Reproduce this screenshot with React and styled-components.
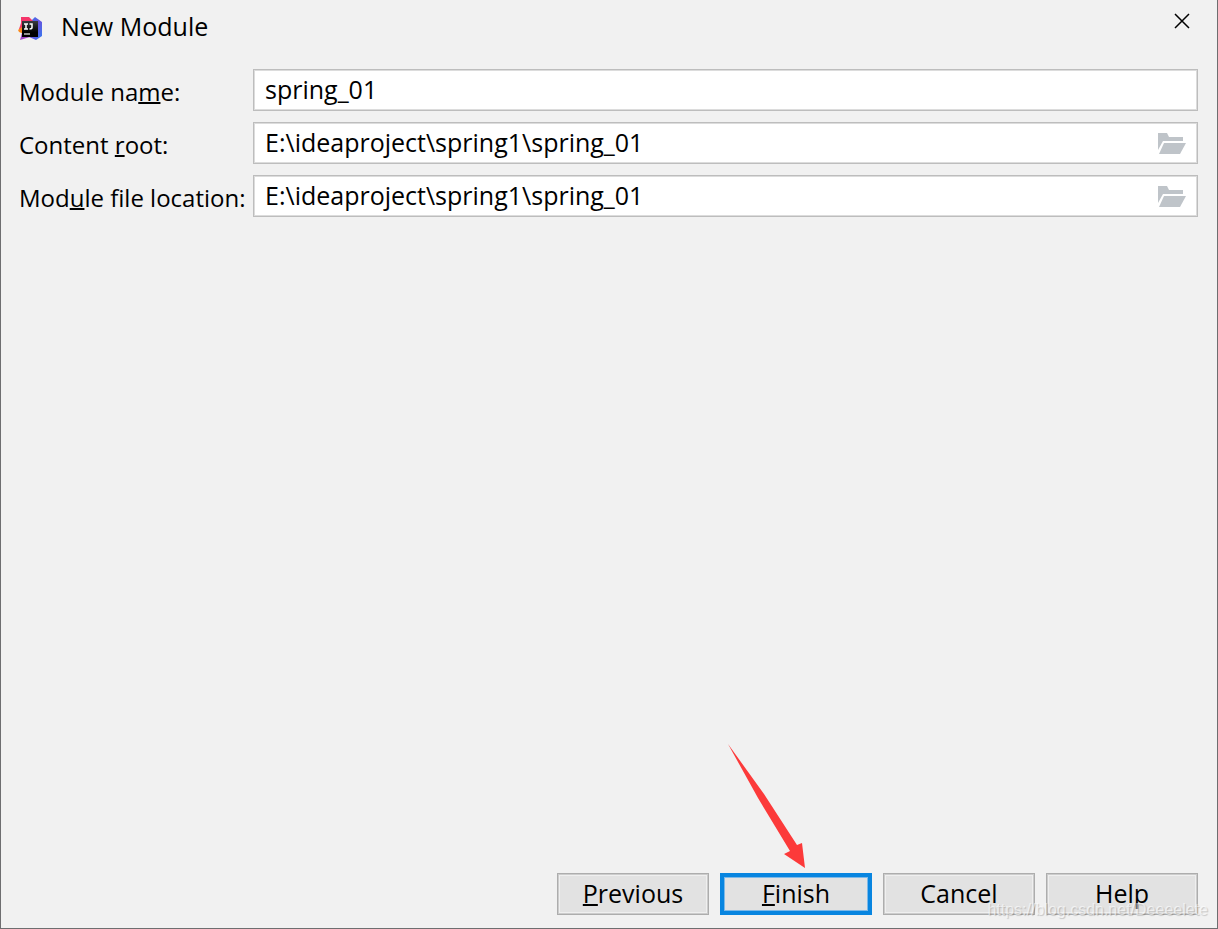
import React, { useState } from "react";
import styled, { createGlobalStyle, css } from "styled-components";

const GlobalStyle = createGlobalStyle`
  * {
    box-sizing: border-box;
  }
  body {
    margin: 0;
    background: #f1f1f1;
    color: #000;
    font-family: "Open Sans", "Noto Sans", sans-serif;
    font-size: 25px;
    line-height: 34px;
  }
  button,
  input {
    font: inherit;
    color: inherit;
  }
`;

const Dialog = styled.form`
  position: relative;
  display: flex;
  flex-direction: column;
  min-height: 100vh;
  border: 1px solid #6e6e70;
  border-top: none;
`;

const TitleBar = styled.header`
  display: flex;
  align-items: flex-start;
  padding: 9px 26px 0 17px;
  height: 69px;
`;

const Title = styled.h1`
  flex: 1;
  margin: 0 0 0 18px;
  font-size: 25px;
  font-weight: 400;
`;

const LogoSvg = styled.svg`
  margin-top: 7px;
  width: 25px;
  height: 25px;
`;

const CloseButton = styled.button`
  display: flex;
  margin-top: 3px;
  padding: 0;
  border: none;
  background: none;
`;

const Fields = styled.div`
  display: grid;
  grid-template-columns: 234px 1fr;
  row-gap: 11px;
  padding: 0 19px 0 18px;
  flex: 1;
  align-content: start;
`;

const Label = styled.label`
  padding-top: 6px;
  font-size: 24px;
  white-space: nowrap;
`;

const InputBox = styled.div`
  display: flex;
  align-items: center;
  height: 42px;
  padding-right: 10px;
  border: 1px solid #bdbdbd;
  box-shadow: inset 0 0 0 1px #dcdcdc;
  background: #fff;
`;

const Input = styled.input`
  flex: 1;
  min-width: 0;
  height: 38px;
  padding: 0 11px 2px;
  border: none;
  outline: none;
  background: transparent;
`;

const BrowseButton = styled.button`
  display: flex;
  padding: 0;
  border: none;
  background: none;
`;

const Mnemonic = styled.span`
  text-decoration: underline;
  text-decoration-thickness: 2px;
  text-underline-offset: 1px;
  text-decoration-skip-ink: none;
`;

const Footer = styled.footer`
  display: flex;
  justify-content: flex-end;
  gap: 11px;
  padding: 0 19px 13px;
`;

const ActionButton = styled.button`
  position: relative;
  width: 152px;
  height: 42px;
  padding: 0 0 3px;
  border: 1px solid #adadad;
  box-shadow: inset 0 0 0 1px #cccccc, inset 0 0 0 2px #efefef;
  background: #e2e2e2;
  line-height: 30px;
  ${({ $primary }) =>
    $primary &&
    css`
      border: 4px solid #0885e0;
      box-shadow: inset 0 0 0 1px #7db9e8;
    `}
`;

const Arrow = styled.svg`
  position: absolute;
  left: 4px;
  bottom: 43px;
  width: 77px;
  height: 124px;
  pointer-events: none;
`;

const Watermark = styled.span`
  position: absolute;
  right: 9px;
  bottom: 6px;
  color: rgba(255, 255, 255, 0.6);
  font-family: "Liberation Sans", Arial, sans-serif;
  font-size: 16px;
  line-height: 24px;
  text-shadow: 1px 1px 1px rgba(0, 0, 0, 0.18);
  pointer-events: none;
`;

function Logo() {
  return (
    <LogoSvg viewBox="0 0 25 25" aria-hidden="true">
      <defs>
        <linearGradient id="blue" x1="0" y1="0" x2="1" y2="1">
          <stop offset="0" stopColor="#2f7df2" />
          <stop offset="0.5" stopColor="#6a52dc" />
          <stop offset="1" stopColor="#2f7df2" />
        </linearGradient>
        <linearGradient id="dark" x1="0" y1="0" x2="0" y2="1">
          <stop offset="0" stopColor="#3a3b40" />
          <stop offset="0.7" stopColor="#000" />
        </linearGradient>
      </defs>
      <path d="M13 5 17 1 24 6 24 20 18 24 11 21Z" fill="url(#blue)" />
      <path d="M3 1 11 1 15 5 5 17 1 13 3 7Z" fill="#f5356a" />
      <path d="M0 14 4 11 6 18 1 16Z" fill="#fb8a1d" />
      <path d="M2 24 4 17 12 21Z" fill="#a047c8" />
      <path d="M4 5H20V21H4Z" fill="url(#dark)" />
      <path
        d="M6 8H10M8 8V13M6 13H10M11.500 8H14V11.500Q14 13 11.500 13"
        fill="none"
        stroke="#fff"
        strokeWidth="1.500"
      />
      <path d="M6 18H12" stroke="#ddd" strokeWidth="1.300" />
    </LogoSvg>
  );
}

function FolderIcon() {
  return (
    <svg width="29" height="22" viewBox="0 0 29 22" aria-hidden="true">
      <path d="M0 1H9L11 5H25V9H5L0 18Z" fill="#bfc4c9" />
      <path d="M6 11H28L22 22H1Z" fill="#bfc4c9" />
    </svg>
  );
}

function FieldRow({ id, label, initial, browse }) {
  const [value, setValue] = useState(initial);
  return (
    <>
      <Label htmlFor={id}>{label}</Label>
      <InputBox>
        <Input
          id={id}
          value={value}
          spellCheck={false}
          onChange={(e) => setValue(e.target.value)}
        />
        {browse && (
          <BrowseButton type="button" aria-label="Browse">
            <FolderIcon />
          </BrowseButton>
        )}
      </InputBox>
    </>
  );
}

export default function App() {
  return (
    <>
      <GlobalStyle />
      <Dialog onSubmit={(e) => e.preventDefault()}>
        <TitleBar>
          <Logo />
          <Title>New Module</Title>
          <CloseButton type="button" aria-label="Close">
            <svg width="18" height="18" viewBox="0 0 18 18">
              <path d="M2 2 16 16M16 2 2 16" stroke="#000" strokeWidth="1.500" />
            </svg>
          </CloseButton>
        </TitleBar>
        <Fields>
          <FieldRow
            id="name"
            label={
              <>
                Module na<Mnemonic>m</Mnemonic>e:
              </>
            }
            initial="spring_01"
          />
          <FieldRow
            id="root"
            label={
              <>
                Content <Mnemonic>r</Mnemonic>oot:
              </>
            }
            initial="E:\ideaproject\spring1\spring_01"
            browse
          />
          <FieldRow
            id="location"
            label={
              <>
                Mod<Mnemonic>u</Mnemonic>le file location:
              </>
            }
            initial="E:\ideaproject\spring1\spring_01"
            browse
          />
        </Fields>
        <Footer>
          <ActionButton type="button">
            <Mnemonic>P</Mnemonic>revious
          </ActionButton>
          <ActionButton type="submit" $primary>
            <Mnemonic>F</Mnemonic>inish
            <Arrow viewBox="0 0 77 124" aria-hidden="true">
              <path
                d="M0 0 36 50 69 101 74 99 77 124 56 110 62 107 30 54Z"
                fill="#fc3a3a"
              />
            </Arrow>
          </ActionButton>
          <ActionButton type="button">Cancel</ActionButton>
          <ActionButton type="button">Help</ActionButton>
        </Footer>
        <Watermark>https://blog.csdn.net/Deeeelete</Watermark>
      </Dialog>
    </>
  );
}
